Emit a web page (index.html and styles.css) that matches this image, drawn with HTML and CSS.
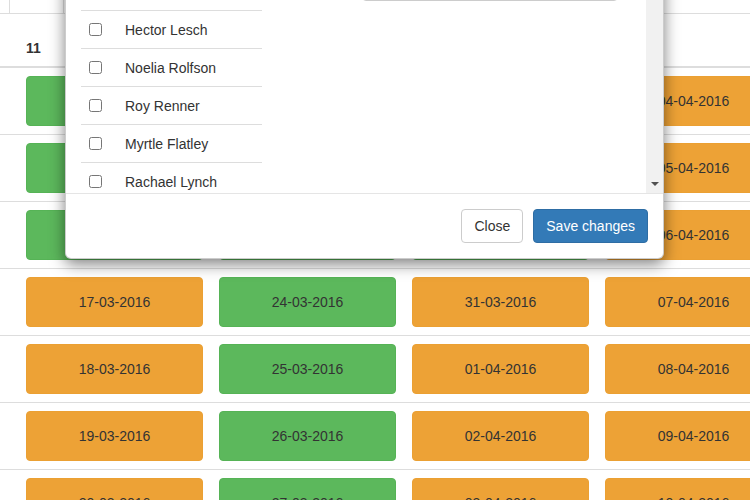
FILE: index.html
```html
<!DOCTYPE html>
<html lang="en">
<head>
  <meta charset="UTF-8">
  <title>Planning</title>
  <link rel="stylesheet" href="styles.css">
</head>
<body>
  <div class="page">
    <div class="toolbar"><span class="tool"></span></div>

    <div class="grid">
      <div class="row head">
        <div class="lead"></div>
        <div class="cell">11</div>
        <div class="cell">12</div>
        <div class="cell">13</div>
        <div class="cell">14</div>
      </div>
      <div class="row">
        <div class="lead"></div>
        <div class="cell"><button class="day ok">14-03-2016</button></div>
        <div class="cell"><button class="day ok">21-03-2016</button></div>
        <div class="cell"><button class="day ok">28-03-2016</button></div>
        <div class="cell"><button class="day late">04-04-2016</button></div>
      </div>
      <div class="row">
        <div class="lead"></div>
        <div class="cell"><button class="day ok">15-03-2016</button></div>
        <div class="cell"><button class="day ok">22-03-2016</button></div>
        <div class="cell"><button class="day ok">29-03-2016</button></div>
        <div class="cell"><button class="day late">05-04-2016</button></div>
      </div>
      <div class="row">
        <div class="lead"></div>
        <div class="cell"><button class="day ok">16-03-2016</button></div>
        <div class="cell"><button class="day ok">23-03-2016</button></div>
        <div class="cell"><button class="day ok">30-03-2016</button></div>
        <div class="cell"><button class="day late">06-04-2016</button></div>
      </div>
      <div class="row">
        <div class="lead"></div>
        <div class="cell"><button class="day late">17-03-2016</button></div>
        <div class="cell"><button class="day ok">24-03-2016</button></div>
        <div class="cell"><button class="day late">31-03-2016</button></div>
        <div class="cell"><button class="day late">07-04-2016</button></div>
      </div>
      <div class="row">
        <div class="lead"></div>
        <div class="cell"><button class="day late">18-03-2016</button></div>
        <div class="cell"><button class="day ok">25-03-2016</button></div>
        <div class="cell"><button class="day late">01-04-2016</button></div>
        <div class="cell"><button class="day late">08-04-2016</button></div>
      </div>
      <div class="row">
        <div class="lead"></div>
        <div class="cell"><button class="day late">19-03-2016</button></div>
        <div class="cell"><button class="day ok">26-03-2016</button></div>
        <div class="cell"><button class="day late">02-04-2016</button></div>
        <div class="cell"><button class="day late">09-04-2016</button></div>
      </div>
      <div class="row">
        <div class="lead"></div>
        <div class="cell"><button class="day late">20-03-2016</button></div>
        <div class="cell"><button class="day ok">27-03-2016</button></div>
        <div class="cell"><button class="day late">03-04-2016</button></div>
        <div class="cell"><button class="day late">10-04-2016</button></div>
      </div>
    </div>

    <div class="modal">
      <div class="modal-body">
        <div class="pane">
          <div class="people">
            <label class="person"><input type="checkbox"><span>Maud Kuhic</span></label>
            <label class="person"><input type="checkbox"><span>Hector Lesch</span></label>
            <label class="person"><input type="checkbox"><span>Noelia Rolfson</span></label>
            <label class="person"><input type="checkbox"><span>Roy Renner</span></label>
            <label class="person"><input type="checkbox"><span>Myrtle Flatley</span></label>
            <label class="person"><input type="checkbox"><span>Rachael Lynch</span></label>
            <label class="person"><input type="checkbox"><span>Evan Stamm</span></label>
          </div>
          <input class="field" type="text">
        </div>
        <div class="scroll"><span class="arrow"></span></div>
      </div>
      <div class="modal-footer">
        <button class="btn">Close</button>
        <button class="btn primary">Save changes</button>
      </div>
    </div>
  </div>
</body>
</html>
```

FILE: styles.css
```css
* {
  box-sizing: border-box;
}
body {
  margin: 0;
  font-family: "Liberation Sans", Arial, sans-serif;
  font-size: 14px;
  line-height: 20px;
  color: #333;
  background: #fff;
  overflow: hidden;
}
.page {
  position: relative;
  width: 750px;
  height: 500px;
  overflow: hidden;
}
.toolbar {
  height: 13px;
}
.tool {
  display: block;
  margin-left: 9px;
  width: 55px;
  height: 13px;
  border-left: 1px solid #ddd;
  border-right: 1px solid #ddd;
}
.grid {
  width: 790px;
}
.row {
  display: flex;
  border-top: 1px solid #ddd;
  padding: 8px 0;
}
.row.head {
  height: 54px;
  padding: 0 0 8px;
  align-items: flex-end;
  border-bottom: 1px solid #ddd;
  font-weight: bold;
}
.lead {
  width: 18px;
  flex: none;
}
.cell {
  width: 193px;
  flex: none;
  padding: 0 8px;
}
.day {
  display: block;
  width: 100%;
  height: 50px;
  border: 1px solid transparent;
  border-radius: 4px;
  font-family: inherit;
  font-size: 14px;
  color: #333;
}
.day.ok {
  background-color: #5cb85c;
  border-color: #56b356;
}
.day.late {
  background-color: #eda236;
  border-color: #eba033;
}
.modal {
  position: absolute;
  left: 65px;
  top: -49px;
  width: 599px;
  background: #fff;
  border: 1px solid rgba(0, 0, 0, 0.2);
  border-radius: 6px;
  box-shadow: 0 5px 15px rgba(0, 0, 0, 0.5);
  z-index: 10;
}
.modal-body {
  display: flex;
  height: 241px;
}
.pane {
  flex: 1;
  display: flex;
  align-items: flex-start;
  padding: 15px;
  overflow: hidden;
}
.people {
  width: 181px;
  flex: none;
  margin-top: 5px;
}
.person {
  display: flex;
  align-items: center;
  height: 38px;
  border-top: 1px solid #ddd;
}
.person input {
  width: 13px;
  height: 13px;
  margin: 0 23px 0 8px;
}
.field {
  margin-left: 100px;
  width: 256px;
  height: 34px;
  border: 1px solid #ccc;
  border-radius: 4px;
  box-shadow: inset 0 1px 1px rgba(0, 0, 0, 0.075);
}
.scroll {
  width: 17px;
  flex: none;
  background: #f1f1f1;
  display: flex;
  flex-direction: column;
  justify-content: flex-end;
  align-items: center;
  padding-bottom: 7px;
}
.arrow {
  width: 0;
  height: 0;
  border-left: 4px solid transparent;
  border-right: 4px solid transparent;
  border-top: 4px solid #505050;
}
.modal-footer {
  display: flex;
  justify-content: flex-end;
  gap: 10px;
  padding: 15px;
  border-top: 1px solid #e5e5e5;
}
.btn {
  height: 34px;
  padding: 6px 12px;
  font-family: inherit;
  font-size: 14px;
  line-height: 20px;
  color: #333;
  background: #fff;
  border: 1px solid #ccc;
  border-radius: 4px;
}
.btn.primary {
  color: #fff;
  background-color: #337ab7;
  border-color: #2e6da4;
}
```
